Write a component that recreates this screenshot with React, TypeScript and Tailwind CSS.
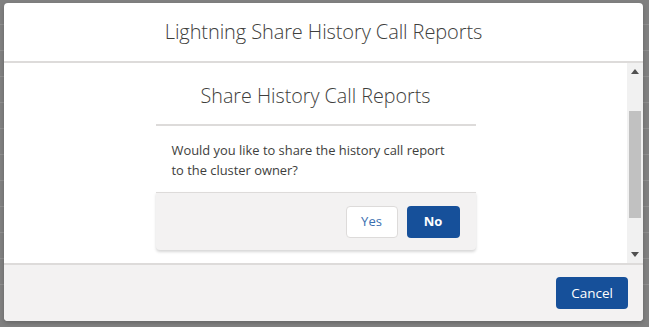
import { useState } from "react"

const rows = [25, 57, 83, 110, 136, 162, 188, 215, 241, 267, 292]

export default function App() {
    const [open] = useState(true)

    return (
        <div className="relative w-[649px] h-[327px] overflow-hidden bg-[#808080] font-['Open_Sans',sans-serif]">
            {/* page behind the overlay */}
            <div className="flex flex-col">
                {rows.map((y, i) => (
                    <div key={i} className="h-[26px] border-b border-[#8f8f8f] first:h-[25px]" />
                ))}
            </div>

            {open && <ShareModal />}
        </div>
    )
}

function ShareModal() {
    return (
        <div className="absolute left-[4px] top-[3px] w-[639px] h-[318px] flex flex-col bg-white rounded-[4px] shadow-[0_2px_4px_rgba(0,0,0,0.2)]">
            <div className="h-[58px] flex items-center justify-center">
                <h2 className="text-[20px] font-light text-[#3e3e3c] tracking-[-0.1px]">
                    Lightning Share History Call Reports
                </h2>
            </div>
            <div className="h-[2px] bg-[#dddbda]" />

            <div className="h-[200px] flex">
                <div className="flex-1 flex justify-center">
                    <ConfirmCard />
                </div>
                <Scrollbar />
            </div>

            <div className="h-[2px] bg-[#dddbda]" />
            <div className="flex-1 flex items-center justify-end pr-[15px] bg-[#f3f2f2] rounded-b-[4px]">
                <button className="w-[72px] h-[32px] rounded-[4px] bg-[#16509a] text-white text-[13.5px]">
                    Cancel
                </button>
            </div>
        </div>
    )
}

function ConfirmCard() {
    return (
        <div className="w-[320px] self-start">
            <div className="pt-[20px] pb-[15px] text-center">
                <h3 className="text-[19.7px] leading-[26px] font-light text-[#3e3e3c]">
                    Share History Call Reports
                </h3>
            </div>
            <div className="h-[2px] bg-[#dddbda]" />
            <p className="pt-[14px] pb-[12px] px-4 text-[12.9px] leading-[20px] text-[#3e3e3c]">
                Would you like to share the history call report
                <br />
                to the cluster owner?
            </p>
            <div className="h-[58px] flex items-center justify-end gap-[9px] pr-4 bg-[#f3f2f2] border-t border-[#dddbda] rounded-b-[4px] shadow-[0_2px_3px_rgba(0,0,0,0.16)]">
                <button className="w-[52px] h-[32px] rounded-[4px] border border-[#dddbda] bg-white text-[13px] text-[#3a6fb0]">
                    Yes
                </button>
                <button className="w-[53px] h-[32px] rounded-[4px] bg-[#16509a] text-[13px] font-bold text-white">
                    No
                </button>
            </div>
        </div>
    )
}

function Scrollbar() {
    return (
        <div className="w-[16px] flex flex-col items-center bg-[#f1f1f1]">
            <div className="h-[17px] flex items-center justify-center">
                <svg width="8" height="5" viewBox="0 0 8 5"><path d="M0 5 L4 0 L8 5 Z" fill="#505050" /></svg>
            </div>
            <div className="flex-1 w-full pt-[31px] pb-[28px] px-[2px]">
                <div className="h-[107px] bg-[#c1c1c1]" />
            </div>
            <div className="h-[17px] flex items-center justify-center">
                <svg width="8" height="5" viewBox="0 0 8 5"><path d="M0 0 L8 0 L4 5 Z" fill="#505050" /></svg>
            </div>
        </div>
    )
}
